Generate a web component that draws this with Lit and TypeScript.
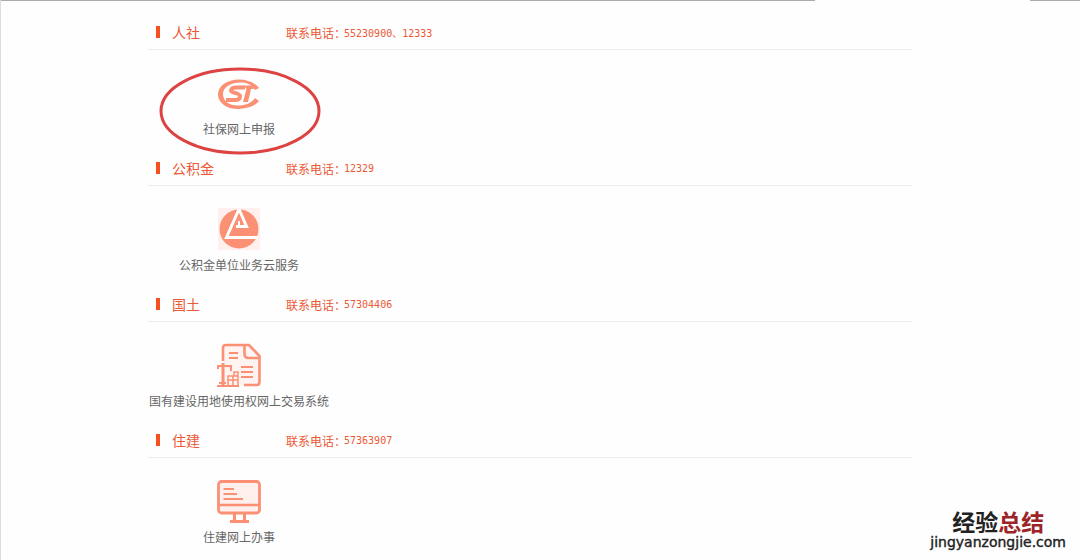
import { LitElement, html, css, svg, nothing } from "lit";
import { customElement, property } from "lit/decorators.js";

type IconName = "csi" | "fund" | "land" | "monitor";

interface Department {
  name: string;
  phones: string;
  service: string;
  icon: IconName;
  marked?: boolean;
}

const departments: Department[] = [
  { name: "人社", phones: "55230900、12333", service: "社保网上申报", icon: "csi", marked: true },
  { name: "公积金", phones: "12329", service: "公积金单位业务云服务", icon: "fund" },
  { name: "国土", phones: "57304406", service: "国有建设用地使用权网上交易系统", icon: "land" },
  { name: "住建", phones: "57363907", service: "住建网上办事", icon: "monitor" },
];

const icons = {
  csi: svg`
    <path fill="currentColor" d="M42 16C38 10.500 30 7.500 22 7.500 10 7.500 1 14 1 22.500S10 37 21 37c9 0 17-3 21-8l-4-3c-3 5-10 7.500-17 7.500-9 0-15-4.500-15-11.500S14 10.500 24 10.500c6 0 11 2 14 7.500Z"/>
    <path fill="none" stroke="currentColor" stroke-width="4" d="M28 15.500H20c-4 0-6 1-6 3.200s9 2.300 9 5.300-2 4-5 4H9"/>
    <path fill="currentColor" d="M27 13.500h9l1 3.500h-3L31 30h-5l3.500-13Z"/>`,
  fund: svg`
    <path fill="#fff0ee" d="M1 0h42v42H1Z"/>
    <circle cx="22" cy="21" r="19.500" fill="currentColor"/>
    <path fill="none" stroke="#fff" stroke-width="3" d="M22 1 9.500 29.500H41M22 1 29.500 18.500H19"/>
    <path fill="none" stroke="#fff" stroke-width="2" d="M22 13v4"/>`,
  land: svg`
    <path fill="#fff4f1" d="M6 1h27l9 11v29H6Z"/>
    <g fill="none" stroke="currentColor">
      <path stroke-width="2.600" d="M6 17V4q0-3 3-3H32L42.500 12V38q0 3-3 3H27"/>
      <path stroke-width="2.600" d="M27.500 1V10q0 4 4 4H42"/>
      <path stroke-width="2" d="M12 9h9M12 14h9M24 23h12M24 28h12M24 33h12"/>
      <path stroke-width="2" d="M0 22h15M14 22v5M0 42h22M2 39h7M1 22v3"/>
      <path stroke-width="3" d="M6 19V42"/>
      <path stroke-width="1.500" d="M11 41V32h10v9M11 36h10M16 32v9M17 32v-4h4v4"/>
    </g>`,
  monitor: svg`
    <path fill="#fff0ee" d="M2 2h40v32H2Z"/>
    <g fill="none" stroke="currentColor">
      <rect x="1.500" y="1.500" width="41" height="31.500" rx="3" stroke-width="2.800"/>
      <path stroke-width="2.500" d="M2 25H42"/>
      <path stroke-width="2.200" d="M6.500 9H17M6.500 14H20M6.500 19H26"/>
      <path stroke-width="3" d="M17.500 33v8M27.500 33v8M13 41.500H32"/>
    </g>`,
};

@customElement("department-section")
class DepartmentSection extends LitElement {
  @property({ attribute: false }) department!: Department;

  static styles = css`
    :host {
      display: block;
    }
    .head {
      display: flex;
      align-items: center;
      height: 30px;
      padding-bottom: 2px;
      border-bottom: 1px solid #ededed;
      color: #ea5835;
    }
    .bar {
      width: 4px;
      height: 12px;
      margin: 0 12px 0 8px;
      background: #f4511e;
    }
    .name {
      width: 114px;
      margin: 0;
      font-size: 14px;
      font-weight: 400;
    }
    .phone {
      display: flex;
      align-items: center;
      margin: 0;
      font-size: 12px;
    }
    .numbers {
      margin-left: -2px;
      font-family: "DejaVu Sans Mono", "Noto Sans CJK SC", monospace;
      font-size: 10px;
    }
    .tile {
      position: relative;
      display: flex;
      flex-direction: column;
      align-items: center;
      gap: 4px;
      width: 182px;
      padding-top: 22px;
      color: #666;
      font-size: 12px;
      line-height: 18px;
      text-decoration: none;
      white-space: nowrap;
    }
    .icon {
      width: 44px;
      height: 44px;
      overflow: visible;
      color: #fb9075;
    }
    .ring {
      position: absolute;
      left: 11px;
      top: 17px;
      width: 162px;
      height: 88px;
    }
  `;

  render() {
    const d = this.department;
    return html`
      <section>
        <header class="head">
          <span class="bar"></span>
          <h2 class="name">${d.name}</h2>
          <p class="phone">联系电话：<span class="numbers">${d.phones}</span></p>
        </header>
        <a class="tile" href="#">
          <svg class="icon" viewBox="0 0 44 44" aria-hidden="true">${icons[d.icon]}</svg>
          <span>${d.service}</span>
          ${d.marked
            ? html`<svg class="ring" viewBox="0 0 162 88" aria-hidden="true">
                <ellipse cx="81" cy="44" rx="79" ry="42" fill="none" stroke="#dc4341" stroke-width="3" />
              </svg>`
            : nothing}
        </a>
      </section>
    `;
  }
}

@customElement("app-root")
class AppRoot extends LitElement {
  static styles = css`
    :host {
      display: block;
      position: relative;
      box-sizing: border-box;
      min-height: 100vh;
      border-left: 1px solid #ddd;
      background: #fefefe;
      font-family: "Noto Sans CJK SC", sans-serif;
    }
    .edge {
      display: flex;
      justify-content: space-between;
      gap: 215px;
    }
    .line {
      flex: 1;
      height: 1px;
      background: #aaa;
    }
    .short {
      flex: 0 0 50px;
    }
    .list {
      display: flex;
      flex-direction: column;
      gap: 15px;
      padding: 16px 168px 0 147px;
    }
    .brand {
      position: absolute;
      right: 14px;
      bottom: 10px;
      display: flex;
      flex-direction: column;
      align-items: center;
      gap: 1px;
      color: #222;
    }
    .title {
      font-size: 23px;
      font-weight: 700;
      line-height: 24px;
    }
    .accent {
      color: #9c2428;
    }
    .site {
      font-family: "DejaVu Sans", sans-serif;
      font-size: 14px;
      font-weight: 400;
      line-height: 16px;
      -webkit-text-stroke: 0.4px #222;
    }
  `;

  render() {
    return html`
      <div class="edge"><span class="line"></span><span class="line short"></span></div>
      <main class="list">
        ${departments.map((d) => html`<department-section .department=${d}></department-section>`)}
      </main>
      <div class="brand">
        <span class="title">经验<span class="accent">总结</span></span>
        <span class="site">jingyanzongjie.com</span>
      </div>
    `;
  }
}
